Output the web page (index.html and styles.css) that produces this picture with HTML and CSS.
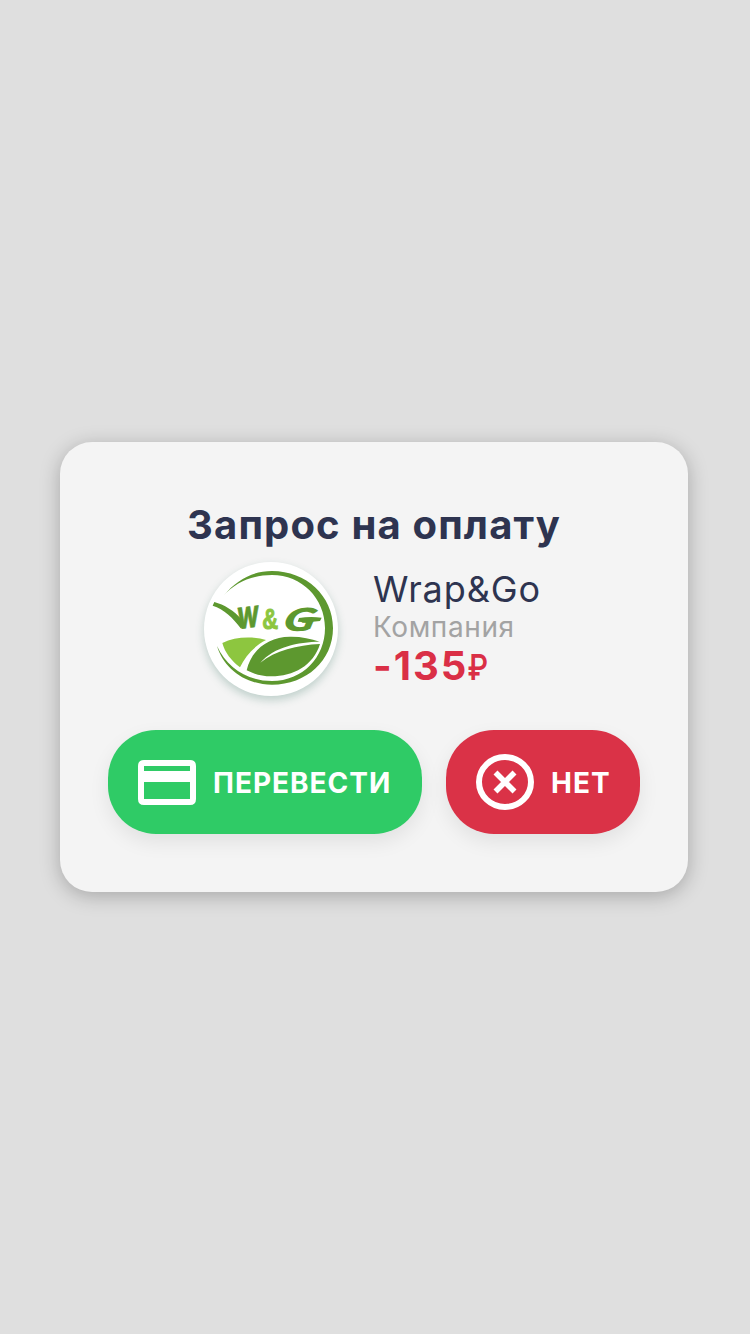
FILE: index.html
```html
<!DOCTYPE html>
<html lang="ru">
<head>
<meta charset="utf-8">
<title>Запрос на оплату</title>
<link rel="stylesheet" href="styles.css">
</head>
<body>
<main class="dialog">
  <h1 class="title">Запрос на оплату</h1>
  <section class="payee">
    <svg class="logo" viewBox="24 30 402 402" aria-label="W&amp;G">
      <path class="leaf" d="M82 132C122 83 171 57 228 57C331 57 411 132 411 228C411 326 331 398 228 398C144 398 82 346 63 282C92 346 153 387 228 387C320 387 387 316 387 228C387 139 317 69 228 69C169 69 117 91 82 132Z"/>
      <path class="leaf" d="M55 150C84 158 114 175 139 205L148 222L134 229C111 197 84 172 50 161Z"/>
      <text class="logo-w" transform="translate(127 231) rotate(-7) scale(.72 1)">W</text>
      <text class="logo-amp" transform="translate(199 231) scale(.77 1)">&amp;</text>
      <text class="logo-g" transform="translate(257 236) skewX(-14) scale(1.45 1)">G</text>
      <path class="leaf" d="M309 198Q342 193 377 197L372 207L350 209L339 218L331 211L305 209Z"/>
      <path class="sprout" d="M79 273C116 255 166 252 210 264C174 283 148 312 132 346C105 325 87 302 79 273Z"/>
      <path class="leaf" d="M152 355C166 293 219 252 286 254C318 254 345 260 371 269C306 270 235 284 193 332C237 296 304 279 372 276C352 341 292 373 226 373C197 373 173 366 152 355Z"/>
    </svg>
    <div class="details">
      <div class="name">Wrap&amp;Go</div>
      <div class="kind">Компания</div>
      <div class="amount">-135<span class="ruble">₽</span></div>
    </div>
  </section>
  <div class="actions">
    <button class="button pay">
      <svg class="icon" viewBox="0 0 58 58"><path fill="#fff" fill-rule="evenodd" d="M6 7H52Q58 7 58 13V46Q58 52 52 52H6Q0 52 0 46V13Q0 7 6 7ZM6 13V18H52V13ZM6 29V46H52V29Z"/></svg>
      <span>ПЕРЕВЕСТИ</span>
    </button>
    <button class="button decline">
      <svg class="icon" viewBox="0 0 58 58"><g fill="none" stroke="#fff"><ellipse cx="29" cy="29" rx="26" ry="25" stroke-width="6"/><path stroke-width="5.6" d="M19.5 19.5L38.5 38.5M38.5 19.5L19.5 38.5"/></g></svg>
      <span>НЕТ</span>
    </button>
  </div>
</main>
</body>
</html>
```
FILE: styles.css
```css
* { box-sizing: border-box; }
body {
  margin: 0;
  min-height: 1334px;
  padding: 442px 62px 0 60px;
  background: #dfdfdf;
  font-family: Inter, "Liberation Sans", sans-serif;
}
.dialog {
  height: 450px;
  padding: 58px 48px;
  border-radius: 32px;
  background: #f4f4f4;
  box-shadow: 0 4px 20px rgba(0, 0, 0, .25);
}
.title {
  margin: 0;
  height: 48px;
  font-size: 40px;
  line-height: 49px;
  font-weight: 660;
  letter-spacing: 1.15px;
  color: #2e3450;
  text-align: center;
  white-space: nowrap;
}
.payee {
  display: flex;
  gap: 34px;
  height: 134px;
  margin: 14px 0 34px 96px;
}
.logo {
  width: 134px;
  height: 134px;
  border-radius: 50%;
  background: #fff;
  box-shadow: 0 4px 8px rgba(38, 105, 85, .26);
}
.leaf, .logo-w, .logo-g { fill: #5d982f; }
.sprout, .logo-amp { fill: #8dc63f; }
.logo-amp { stroke: #8dc63f; stroke-width: 3px; }
.logo-w { font: italic 800 86px Inter, sans-serif; stroke: #5d982f; stroke-width: 2px; }
.logo-amp { font: 700 86px "Liberation Sans", sans-serif; }
.logo-g { font: italic 800 96px Lato, sans-serif; }
.details { padding: 5px 0 0 1px; white-space: nowrap; }
.name {
  font-size: 36px;
  line-height: 45px;
  font-weight: 430;
  letter-spacing: .9px;
  color: #2e3450;
}
.kind {
  font-size: 28px;
  line-height: 30px;
  font-weight: 430;
  letter-spacing: .6px;
  color: #a3a3a3;
}
.amount {
  font-size: 40px;
  line-height: 48px;
  font-weight: 680;
  letter-spacing: 2px;
  color: #da2f46;
}
.ruble {
  display: inline-block;
  font-family: Roboto, sans-serif;
  font-size: 36px;
  line-height: 40px;
  font-weight: 500;
  transform: scaleX(.8);
  transform-origin: 0 50%;
}
.actions { display: flex; gap: 24px; }
.button {
  display: flex;
  align-items: center;
  gap: 17px;
  height: 104px;
  padding: 0 30px;
  border: 0;
  border-radius: 48px;
  color: #fff;
  font: 660 28px Inter, sans-serif;
  letter-spacing: 1px;
  white-space: nowrap;
  box-shadow: 0 8px 20px rgba(0, 0, 0, .08);
}
.button span { padding-top: 1px; }
.pay { width: 314px; background: #2fcb66; }
.decline { width: 194px; background: #da3247; }
.icon { flex: none; width: 58px; height: 58px; }
```
